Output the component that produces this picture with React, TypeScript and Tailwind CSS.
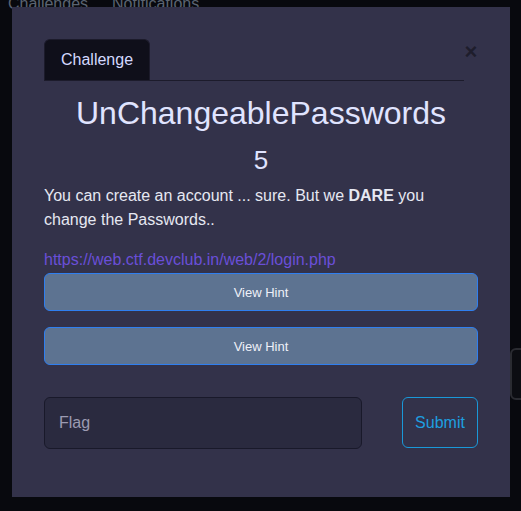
import React from "react";

export default function App() {
  return (
    <div
      className="relative w-[521px] h-[511px] overflow-hidden bg-[#08090e]"
      style={{ fontFamily: '"Liberation Sans", Arial, sans-serif' }}
    >
      {/* background page */}
      <div className="flex gap-[24px] pl-[8px] -mt-[6px] text-[16px] leading-[20px] text-[#5b6472]">
        <span>Challenges</span>
        <span>Notifications</span>
      </div>
      <div className="absolute left-[510px] top-[348px] w-[60px] h-[52px] rounded-[6px] border-2 border-[#2a2b31] bg-[#0c0d12]" />

      {/* modal */}
      <div className="absolute left-[12px] top-[7px] w-[498px] h-[490px] bg-[#33324a] px-[32px] pt-[32px]">
        <div className="flex items-start">
          <div className="flex-1 border-b border-[#1c1b2b]">
            <div className="w-[106px] h-[41px] rounded-t-[6px] bg-[#0f0f1a] border border-b-0 border-[#1c1b2b] flex items-center justify-center text-[16px] text-[#d4d9ff]">
              Challenge
            </div>
          </div>
          <button className="w-[14px] mt-[3px] text-[#1e1d2c] text-[22px] leading-[20px] font-bold flex justify-center">
            ×
          </button>
        </div>

        <div className="mt-[13px] text-center text-[32px] leading-[38px] text-[#e0e4ff]">
          UnChangeablePasswords
        </div>
        <div className="mt-[13px] text-center text-[26px] leading-[31px] text-[#e0e4ff]">
          5
        </div>
        <p className="mt-[8px] text-[16px] leading-[24px] text-[#e6e8f2]">
          You can create an account ... sure. But we <b>DARE</b> you change the Passwords..
        </p>
        <div className="mt-[16px] text-[16px] leading-[24px] text-[#6a4fd8]">
          https://web.ctf.devclub.in/web/2/login.php
        </div>
        <button className="mt-[1px] w-full h-[38px] pt-[2px] rounded-[6px] bg-[#5d7391] border border-[#2f7ff0] text-[13px] text-[#eef0f8]">
          View Hint
        </button>
        <button className="mt-[16px] w-full h-[38px] pt-[2px] rounded-[6px] bg-[#5d7391] border border-[#2f7ff0] text-[13px] text-[#eef0f8]">
          View Hint
        </button>

        <div className="mt-[32px] flex items-start justify-between">
          <div className="w-[318px] h-[52px] rounded-[6px] bg-[#2a2a3f] border border-[#19192a] flex items-center pl-[14px] text-[16px] text-[#9c9bb2]">
            Flag
          </div>
          <button className="w-[76px] h-[51px] rounded-[6px] border border-[#1a98d8] text-[16px] text-[#1e9fe0]">
            Submit
          </button>
        </div>
      </div>
    </div>
  );
}
